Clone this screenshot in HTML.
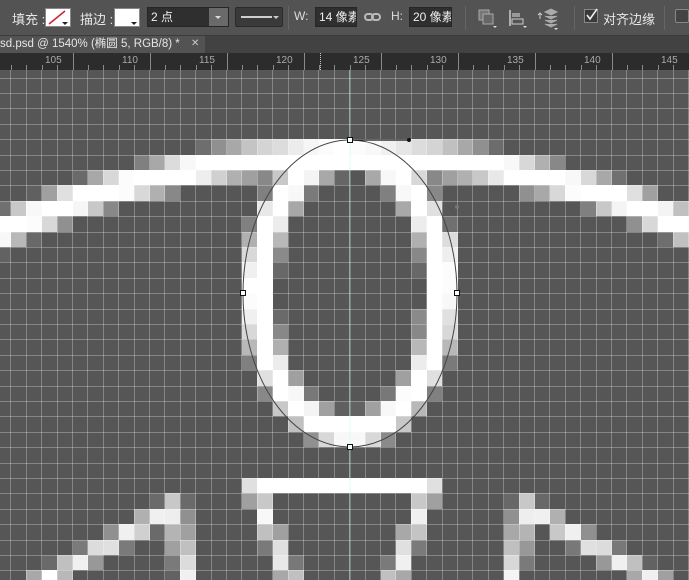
<!DOCTYPE html>
<html><head><meta charset="utf-8"><style>
*{margin:0;padding:0;box-sizing:border-box}
body{width:689px;height:580px;overflow:hidden;background:#535353;position:relative;font-family:"Liberation Sans","Noto Sans CJK SC",sans-serif}
.a{position:absolute}
#tb{left:0;top:0;width:689px;height:36px;background:#535353;border-bottom:1px solid #3a3a3a}
.t{color:#e8e8e8;font-size:13px;top:9px;white-space:nowrap}
.sep{top:6px;width:1px;height:24px;background:#3c3c3c;border-right:1px solid #666}
.inp{top:7px;height:20px;background:#2f2f2f;border:1px solid #262626;color:#eee;font-size:12px;line-height:18px;padding-left:3px;white-space:nowrap;overflow:hidden}
#tab{left:0;top:36px;width:689px;height:17px;background:#424242}
#ruler{left:0;top:53px;width:689px;height:17px;background:#2c2c2c}
#cv{left:0;top:70px;width:689px;height:510px;overflow:hidden;background:#565656}
.c{position:absolute;width:15.4px;height:15.4px}
.gv{position:absolute;top:0;width:1px;height:510px;background:rgba(255,255,255,.28)}
.gh{position:absolute;left:0;height:1px;width:689px;background:rgba(255,255,255,.28)}
</style></head><body>
<div id="tb" class="a">
 <div class="a t" style="left:12px">填充 :</div>
 <div class="a" style="left:45px;top:8px;width:26px;height:19px;background:#fff;border:1px solid #888"><svg width="24" height="17" style="position:absolute;left:0;top:0"><line x1="3" y1="15" x2="19" y2="2" stroke="#d02030" stroke-width="1.5"/><path d="M16 13h6l-3 3z" fill="#222"/></svg></div>
 <div class="a t" style="left:80px">描边 :</div>
 <div class="a" style="left:114px;top:8px;width:26px;height:19px;background:#fff;border:1px solid #888"><svg width="24" height="17" style="position:absolute;left:0;top:0"><path d="M16 13h6l-3 3z" fill="#222"/></svg></div>
 <div class="a inp" style="left:147px;width:82px">2 点</div>
 <div class="a" style="left:209px;top:8px;width:19px;height:18px;background:#6a6a6a"><svg width="19" height="18"><path d="M6 8h6l-3 3z" fill="#ddd"/></svg></div>
 <div class="a" style="left:235px;top:7px;width:48px;height:20px;background:#3a3a3a;border:1px solid #2a2a2a;border-radius:2px"><svg width="46" height="18"><line x1="5" y1="9" x2="36" y2="9" stroke="#fff" stroke-width="1.5"/><path d="M37 8h6l-3 3z" fill="#ccc"/></svg></div>
 <div class="a sep" style="left:288px"></div>
 <div class="a t" style="left:294px;font-size:12px;color:#ddd">W:</div>
 <div class="a inp" style="left:315px;width:42px">14 像素</div>
 <svg class="a" style="left:364px;top:10px" width="18" height="14"><rect x="1" y="4" width="8" height="6" rx="3" fill="none" stroke="#bbb" stroke-width="2"/><rect x="8" y="4" width="8" height="6" rx="3" fill="none" stroke="#bbb" stroke-width="2"/></svg>
 <div class="a t" style="left:391px;font-size:12px;color:#ddd">H:</div>
 <div class="a inp" style="left:409px;width:43px">20 像素</div>
 <div class="a sep" style="left:465px"></div>
 <svg class="a" style="left:478px;top:9px" width="20" height="20"><rect x="1" y="1" width="10" height="10" fill="#777" stroke="#aaa"/><rect x="5" y="5" width="10" height="10" fill="#666" stroke="#aaa"/><path d="M15 17h4l-2 2z" fill="#ddd"/></svg>
 <svg class="a" style="left:508px;top:9px" width="20" height="20"><path d="M2 1v16" stroke="#ccc" stroke-width="1.5"/><rect x="4" y="4" width="8" height="4" fill="#999"/><rect x="4" y="10" width="11" height="5" fill="none" stroke="#ccc"/><path d="M15 17h4l-2 2z" fill="#ddd"/></svg>
 <svg class="a" style="left:537px;top:8px" width="22" height="22"><path d="M3 5v6M1 7l2-2 2 2" stroke="#ccc" fill="none"/><path d="M8 4l6-3 6 3-6 3z M8 8l6 3 6-3M8 12l6 3 6-3M8 16l6 3 6-3" fill="#aaa" stroke="#aaa"/><path d="M17 20h4l-2 2z" fill="#ddd"/></svg>
 <div class="a sep" style="left:574px"></div>
 <div class="a" style="left:584px;top:9px;width:14px;height:14px;background:#3a3a3a;border:1px solid #888"><svg width="14" height="14" style="position:absolute;left:0;top:-2px"><path d="M2 7l3 4 7-10" stroke="#eee" stroke-width="1.6" fill="none"/></svg></div>
 <div class="a t" style="left:603px">对齐边缘</div>
 <div class="a sep" style="left:664px"></div>
 <div class="a" style="left:675px;top:9px;width:14px;height:14px;background:#444;border:1px solid #888;border-radius:2px"></div>
</div>
<div id="tab" class="a"><div class="a" style="left:0;top:0;width:205px;height:17px;background:#535353;color:#e6e6e6;font-size:11.5px;line-height:17px;white-space:nowrap">sd.psd @ 1540% (椭圆 5, RGB/8) *</div><span class="a" style="left:191px;top:2px;font-size:10px;color:#ccc">✕</span></div>
<div id="ruler" class="a"></div>
<div id="cv" class="a"><div id="cells" class="a" style="left:0;top:0"></div><div id="grid" class="a" style="left:0;top:0"></div>
<svg class="a" style="left:0;top:0" width="689" height="510">
<line x1="350" y1="0" x2="350" y2="510" stroke="#bfe" stroke-width="0.8" opacity=".7"/>
<ellipse cx="350" cy="223.5" rx="107" ry="153.5" fill="none" stroke="#444" stroke-width="1"/>
<line x1="350" y1="70" x2="409" y2="70" stroke="#111" stroke-width="1.2"/>
<circle cx="409" cy="70" r="2" fill="#111"/><circle cx="457" cy="137" r="2" fill="#777"/>
<rect x="347.5" y="67.5" width="5" height="5" fill="#fff" stroke="#111"/>
<rect x="240.5" y="220.5" width="5" height="5" fill="#fff" stroke="#111"/>
<rect x="454.5" y="220.5" width="5" height="5" fill="#fff" stroke="#111"/>
<rect x="347.5" y="374.5" width="5" height="5" fill="#fff" stroke="#111"/>
</svg></div>
<script>
var r=document.getElementById('ruler'),h='';
for(var k=0;k<46;k++){var x=Math.round(-4.5+15.4*k);var maj=(k%5==0);
h+='<div class="a" style="left:'+x+'px;top:'+(maj?0:12)+'px;width:1px;height:'+(maj?17:5)+'px;background:#8a8a8a"></div>';}
for(var k=0;k<9;k++){var x=Math.round(41.7+77*k);h+='<div class="a" style="left:'+(x+3)+'px;top:2px;font-size:10px;color:#aaa">'+(105+5*k)+'</div>';}
h+='<div class="a" style="left:320px;top:0;width:1px;height:17px;border-left:1px dotted #ccc"></div>';
r.innerHTML=h;
var g='';
for(var k=0;k<46;k++){g+='<div class="gv" style="left:'+Math.round(10.3+15.4*k-15.4)+'px"></div>';}
for(var k=0;k<35;k++){g+='<div class="gh" style="top:'+Math.round(62.2+15.4*k-70)+'px"></div>';}
document.getElementById('grid').innerHTML=g;
var D={
5:"13=6e,14=90,15=a8,16=c4,17=d4,18=dc,19=ec,20=f6,21=fc,22=ff,23=fc,24=f8,25=f0,26=e6,27=dc,28=d4,29=c0,30=a8,31=90,32=6c",
6:"9=80,10=a8,11=dc,12=f8,13=ff,14=ff,15=ff,16=ff,17=ff,18=ff,19=ff,20=ff,21=ff,22=ff,23=ff,24=ff,25=ff,26=ff,27=ff,28=ff,29=ff,30=ff,31=ff,32=ff,33=f8,34=d8,35=b0,36=88",
7:"5=6a,6=a8,7=d8,8=fc,9=ff,10=ff,11=ff,12=ff,13=ee,14=d0,15=b0,16=a0,17=88,18=c8,19=ff,20=f4,21=a8,22=66,24=a8,25=f8,26=ff,27=d8,28=88,29=a0,30=b0,31=c8,32=e8,33=ff,34=ff,35=ff,36=ff,37=f8,38=d8,39=a8,40=70",
8:"2=60,3=a0,4=e0,5=ff,6=ff,7=ff,8=fc,9=d8,10=b0,11=88,17=80,18=ff,19=f8,20=7a,25=80,26=f8,27=ff,28=88,34=90,35=a8,36=d8,37=fc,38=ff,39=ff,40=ff,41=e0,42=a0",
9:"0=70,1=c8,2=f8,3=ff,4=ff,5=f6,6=c8,7=88,17=e8,18=ff,19=a8,26=a8,27=ff,28=e0,38=80,39=c8,40=f4,41=ff,42=ff,43=f4,44=c0",
10:"0=ff,1=ff,2=fc,3=d8,4=90,16=80,17=ff,18=ec,27=ec,28=ff,29=70,41=90,42=d8,43=ff,44=ff",
11:"0=f8,1=b8,2=68,16=b0,17=ff,18=b8,27=b0,28=ff,29=dc,43=6e,44=c0",
12:"0=62,16=d8,17=ff,18=8a,27=88,28=ff,29=ee",
13:"16=f0,17=ff,18=68,27=68,28=ff,29=fc",
14:"16=ff,17=ff,28=ff,29=fc",
15:"16=fc,17=ff,28=ff,29=f8",
16:"16=f0,17=ff,18=6a,27=8a,28=ff,29=e0",
17:"16=d8,17=ff,18=88,27=88,28=ff,29=d8",
18:"16=b8,17=ff,18=b0,27=b8,28=ff,29=b8",
19:"16=80,17=ff,18=ec,27=ec,28=ff,29=7a",
20:"17=e0,18=ff,19=a0,26=a0,27=ff,28=e0",
21:"17=88,18=ff,19=f8,20=78,25=78,26=fc,27=ff,28=80",
22:"18=c8,19=ff,20=f4,21=a0,22=60,23=62,24=a0,25=f8,26=ff,27=b8",
23:"19=c0,20=ff,21=ff,22=ff,23=ff,24=ff,25=ff,26=c8",
24:"20=90,21=d8,22=f8,23=f8,24=d8,25=8a",
27:"16=e0,17=ff,18=ff,19=ff,20=ff,21=ff,22=ff,23=ff,24=ff,25=ff,26=ff,27=ff,28=e0",
28:"10=6a,11=c8,12=6a,16=a0,17=c8,27=c8,28=a0,33=68,34=c8,35=68",
29:"9=b0,10=f0,11=ee,12=90,17=f8,27=f0,33=90,34=ee,35=f0,36=b0",
30:"7=90,8=f0,9=d0,10=6a,11=b4,12=a0,17=c0,18=a0,26=a8,27=c4,33=a8,34=b4,36=c8,37=f0,38=90",
31:"5=7a,6=dc,7=e0,8=7a,11=a0,12=c0,17=7a,18=e0,26=e0,27=7a,33=c0,34=98,37=78,38=e0,39=dc,40=78",
32:"3=6a,4=c0,5=f0,6=98,11=7a,12=dc,18=e8,19=78,25=7a,26=f0,33=d8,34=7a,39=98,40=f0,41=c0,42=62",
33:"2=a8,3=ff,4=b8,11=62,12=f0,18=a8,19=c0,25=c0,26=a8,33=f4,41=a8,42=f0,43=a0"};
var o='';
for(var row in D){D[row].split(',').forEach(function(p){var q=p.split('=');var c=+q[0];
var L=Math.round(-4.5+15.4*c),R=Math.round(-4.5+15.4*(c+1)),T=Math.round(62.2+15.4*row-70),B=Math.round(62.2+15.4*(+row+1)-70);
o+='<div class="c" style="left:'+L+'px;top:'+T+'px;width:'+(R-L)+'px;height:'+(B-T)+'px;background:#'+q[1]+q[1]+q[1]+'"></div>';});}
document.getElementById('cells').innerHTML=o;
</script>
</body></html>
